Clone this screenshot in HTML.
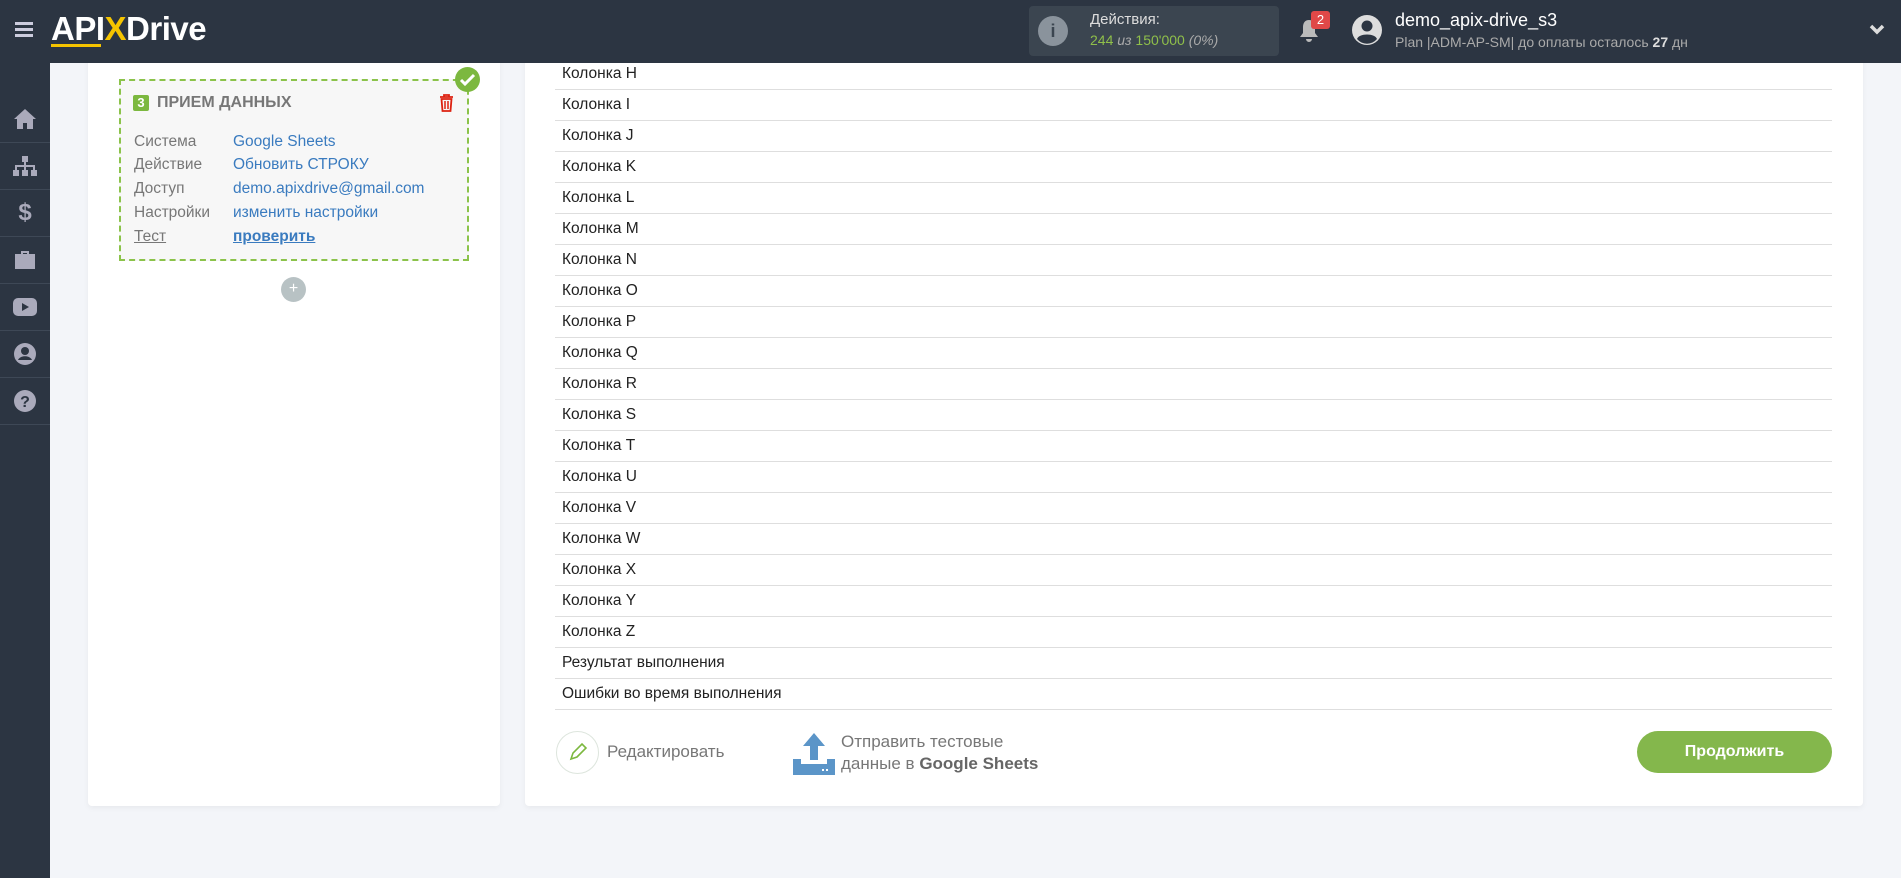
<!DOCTYPE html>
<html><head><meta charset="utf-8"><style>
*{margin:0;padding:0;box-sizing:border-box}
body{width:1901px;height:878px;overflow:hidden;background:#f3f5f9;font-family:"Liberation Sans",sans-serif;position:relative}
.top{position:absolute;left:0;top:0;width:1901px;height:63px;background:#2c3542;z-index:10}
.side{position:absolute;left:0;top:63px;width:50px;height:815px;background:#2c3542;z-index:10}
.side .it{height:47px;border-bottom:1px solid #3e4856;display:flex;align-items:center;justify-content:center}
.panel{position:absolute;background:#fff;border-radius:4px;box-shadow:0 2px 6px rgba(0,0,0,.05)}
.row{position:absolute;left:555px;width:1277px;height:31px;border-bottom:1.5px solid #dedede;font-size:15.5px;color:#222;padding-left:7px;line-height:30px}
.lab{position:absolute;left:134px;font-size:15.5px;color:#777}
.val{position:absolute;left:233px;font-size:15.5px;color:#3a7bbf}
</style></head><body>
<div class="top">
  <div style="position:absolute;left:15px;top:22px;width:18px;height:3px;background:#ccd;box-shadow:0 6px 0 #ccd,0 12px 0 #ccd"></div>
  <div style="position:absolute;left:51px;top:10px;font-size:33px;font-weight:bold;color:#fff;letter-spacing:-0.5px">API<span style="color:#f5c400">X</span>Drive</div>
  <div style="position:absolute;left:51px;top:44px;width:50px;height:3px;background:#f5c400"></div>
  <div style="position:absolute;left:1029px;top:6px;width:250px;height:50px;background:#3b4550;border-radius:4px">
    <div style="position:absolute;left:9px;top:10px;width:30px;height:30px;border-radius:50%;background:#8a939c;color:#3b4550;font-weight:bold;text-align:center;line-height:30px;font-size:18px">i</div>
    <div style="position:absolute;left:61px;top:5px;color:#ddd;font-size:15px">Действия:</div>
    <div style="position:absolute;left:61px;top:26px;color:#8fbf4a;font-size:14px">244 <i style="color:#aaa">из</i> 150'000 <i style="color:#aaa">(0%)</i></div>
  </div>
  <svg style="position:absolute;left:1298px;top:18px" width="22" height="26" viewBox="0 0 22 26"><path d="M11 2c-4 0-6 3-6 7v6l-3 4h18l-3-4V9c0-4-2-7-6-7zM8 21a3 3 0 006 0z" fill="#bbb"/></svg>
  <div style="position:absolute;left:1311px;top:11px;width:19px;height:18px;background:#e04848;border-radius:3px;color:#fff;font-size:13px;text-align:center;line-height:18px">2</div>
  <svg style="position:absolute;left:1351px;top:14px" width="32" height="32" viewBox="0 0 32 32"><circle cx="16" cy="16" r="15" fill="#ddd"/><circle cx="16" cy="12" r="5.5" fill="#2c3542"/><path d="M6 25c2-6 18-6 20 0a13 13 0 01-20 0z" fill="#2c3542"/></svg>
  <div style="position:absolute;left:1395px;top:10px;color:#fff;font-size:18px">demo_apix-drive_s3</div>
  <div style="position:absolute;left:1395px;top:34px;color:#aaa;font-size:14px">Plan |ADM-AP-SM| до оплаты осталось <b style="color:#ddd">27</b> дн</div>
  <svg style="position:absolute;left:1869px;top:24px" width="16" height="12" viewBox="0 0 16 12"><path d="M2 2l6 6 6-6" stroke="#ddd" stroke-width="3.5" fill="none"/></svg>
</div>
<div class="side">
  <div class="it" style="height:33px;border:none"></div>
  <div class="it"><svg width="24" height="22" viewBox="0 0 24 22"><path d="M12 1L1 11h3v10h6v-6h4v6h6V11h3z" fill="#aab"/></svg></div>
  <div class="it"><svg width="26" height="22" viewBox="0 0 26 22"><path d="M10 1h6v6h-2v3h9v5h2v6h-6v-6h2v-3h-7v3h2v6h-6v-6h2v-3H5v3h2v6H1v-6h2v-5h9V7h-2z" fill="#aab"/></svg></div>
  <div class="it" style="color:#aab;font-size:24px;font-weight:bold">$</div>
  <div class="it"><svg width="24" height="20" viewBox="0 0 24 20"><path d="M8 1h8v3h6v15H2V4h6zM10 3v1h4V3z" fill="#aab"/></svg></div>
  <div class="it"><svg width="24" height="18" viewBox="0 0 24 18"><rect width="24" height="18" rx="5" fill="#aab"/><path d="M9 5v8l7-4z" fill="#2c3542"/></svg></div>
  <div class="it"><svg width="24" height="24" viewBox="0 0 24 24"><circle cx="12" cy="12" r="11" fill="#aab"/><circle cx="12" cy="9" r="4" fill="#2c3542"/><path d="M5 18c2-5 12-5 14 0" fill="#2c3542"/></svg></div>
  <div class="it"><svg width="24" height="24" viewBox="0 0 24 24"><circle cx="12" cy="12" r="11" fill="#aab"/><text x="12" y="18" font-size="16" font-weight="bold" text-anchor="middle" fill="#2c3542" font-family="Liberation Sans">?</text></svg></div>
</div>
<div class="panel" style="left:88px;top:50px;width:412px;height:756px;border-radius:0 0 4px 4px"></div>
<div style="position:absolute;left:119px;top:79px;width:350px;height:182px;background:#f7f7f7;border:2px dashed #8bc34a"></div>
<div style="position:absolute;left:455px;top:67px;width:25px;height:25px;border-radius:50%;background:#7cb83f"><svg width="25" height="25" viewBox="0 0 25 25"><path d="M6 13l4 4 9-9" stroke="#fff" stroke-width="3" fill="none"/></svg></div>
<div style="position:absolute;left:133px;top:95px;width:16px;height:16px;background:#7cb83f;color:#fff;font-size:13px;font-weight:bold;text-align:center;line-height:16px;border-radius:2px">3</div>
<div style="position:absolute;left:157px;top:94px;font-size:16px;font-weight:bold;color:#777">ПРИЕМ ДАННЫХ</div>
<svg style="position:absolute;left:439px;top:94px" width="15" height="18" viewBox="0 0 15 18"><path d="M1 3h13M5 3V1h5v2M2.5 5h10l-1 12h-8z" stroke="#d21" stroke-width="1.8" fill="none"/><path d="M6 7v8M9 7v8" stroke="#d21" stroke-width="1.5"/></svg>
<div class="lab" style="top:133px">Система</div><div class="val" style="top:133px">Google Sheets</div>
<div class="lab" style="top:156px">Действие</div><div class="val" style="top:156px">Обновить СТРОКУ</div>
<div class="lab" style="top:180px">Доступ</div><div class="val" style="top:180px">demo.apixdrive@gmail.com</div>
<div class="lab" style="top:204px">Настройки</div><div class="val" style="top:204px">изменить настройки</div>
<div class="lab" style="top:228px;text-decoration:underline">Тест</div><div class="val" style="top:228px;font-weight:bold;text-decoration:underline">проверить</div>
<div style="position:absolute;left:281px;top:277px;width:25px;height:25px;border-radius:50%;background:#b8c2c4;color:#fff;text-align:center;line-height:24px;font-size:16px">+</div>
<div class="panel" style="left:525px;top:50px;width:1338px;height:756px;border-radius:0 0 4px 4px"></div>
<div class="row" style="top:59px">Колонка H</div>
<div class="row" style="top:90px">Колонка I</div>
<div class="row" style="top:121px">Колонка J</div>
<div class="row" style="top:152px">Колонка K</div>
<div class="row" style="top:183px">Колонка L</div>
<div class="row" style="top:214px">Колонка M</div>
<div class="row" style="top:245px">Колонка N</div>
<div class="row" style="top:276px">Колонка O</div>
<div class="row" style="top:307px">Колонка P</div>
<div class="row" style="top:338px">Колонка Q</div>
<div class="row" style="top:369px">Колонка R</div>
<div class="row" style="top:400px">Колонка S</div>
<div class="row" style="top:431px">Колонка T</div>
<div class="row" style="top:462px">Колонка U</div>
<div class="row" style="top:493px">Колонка V</div>
<div class="row" style="top:524px">Колонка W</div>
<div class="row" style="top:555px">Колонка X</div>
<div class="row" style="top:586px">Колонка Y</div>
<div class="row" style="top:617px">Колонка Z</div>
<div class="row" style="top:648px">Результат выполнения</div>
<div class="row" style="top:679px">Ошибки во время выполнения</div>
<div style="position:absolute;left:556px;top:731px;width:43px;height:43px;border-radius:50%;border:1.5px solid #dde5dd"><svg width="40" height="40" viewBox="0 0 40 40"><path d="M14 27l2-6 9-9 4 4-9 9z" stroke="#7cb83f" stroke-width="1.6" fill="none"/></svg></div>
<div style="position:absolute;left:607px;top:742px;font-size:17px;color:#777">Редактировать</div>
<svg style="position:absolute;left:793px;top:733px" width="42" height="42" viewBox="0 0 42 42"><path d="M21 0l11 13h-7v14h-8V13h-7z" fill="#5b95c8"/><path d="M0 26h8v5h26v-5h8v16H0z" fill="#5b95c8"/><rect x="29" y="36" width="2" height="2" fill="#fff"/><rect x="33" y="36" width="2" height="2" fill="#fff"/></svg>
<div style="position:absolute;left:841px;top:731px;font-size:17px;color:#777;line-height:22px">Отправить тестовые<br>данные в <b style="color:#666">Google Sheets</b></div>
<div style="position:absolute;left:1637px;top:731px;width:195px;height:42px;border-radius:21px;background:#84b74c;color:#fff;font-size:16px;font-weight:bold;text-align:center;line-height:42px">Продолжить</div>
</body></html>
